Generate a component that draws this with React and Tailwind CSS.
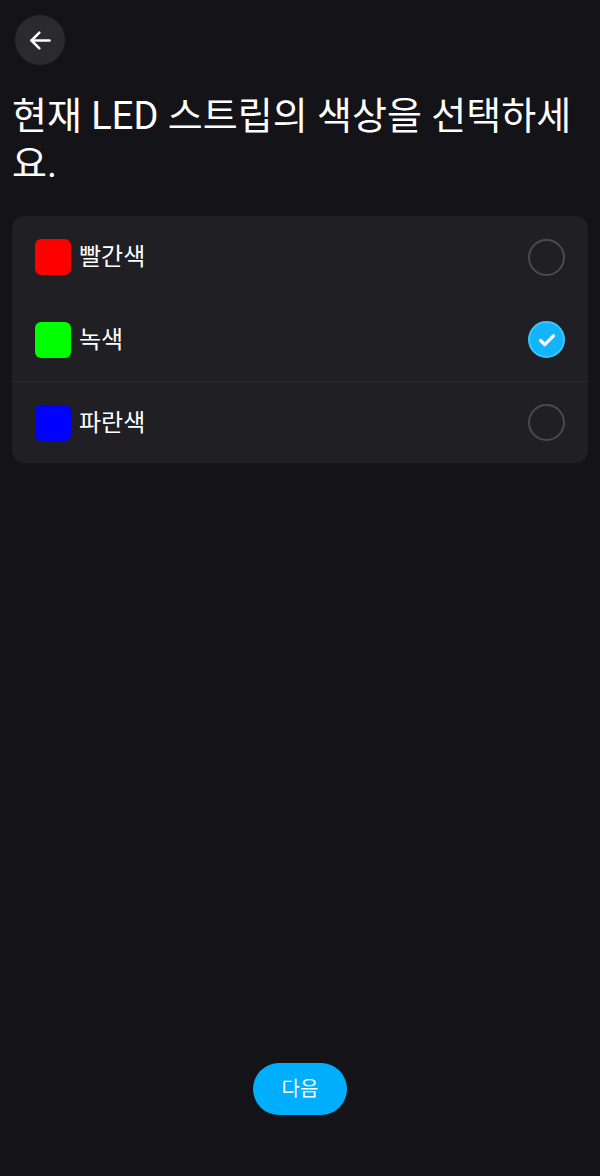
import React, { useState } from "react";

const options = [
  { id: "red", label: "빨간색", color: "bg-[#ff0000]", h: "h-[82px]" },
  { id: "green", label: "녹색", color: "bg-[#00ff00]", h: "h-[83px]" },
  { id: "blue", label: "파란색", color: "bg-[#0000ff]", h: "h-[82px] border-t border-[#2a2a2f]" },
];

export default function App() {
  const [selected, setSelected] = useState("green");
  return (
    <div
      className="w-[600px] h-[1176px] bg-[#131318] text-white flex flex-col"
      style={{ fontFamily: 'Roboto, "Noto Sans CJK KR", "Noto Sans", sans-serif' }}
    >
      <div className="px-[15px] pt-[15px]">
        <button className="w-[50px] h-[50px] rounded-full bg-[#2a2a2f] flex items-center justify-center">
          <svg width="27" height="27" viewBox="0 0 24 24" fill="none" stroke="white" strokeWidth="2.2" strokeLinecap="round" strokeLinejoin="round">
            <path d="M20 12H4" />
            <path d="M11 5l-7 7 7 7" />
          </svg>
        </button>
      </div>
      <h1 className="px-[12px] mt-[27px] text-[38px] leading-[48px] font-normal">
        현재 LED 스트립의 색상을 선택하세요.
      </h1>
      <div className="mx-[12px] mt-[28px] rounded-[12px] bg-[#1f1f24] overflow-hidden">
        {options.map((o) => (
          <div
            key={o.id}
            onClick={() => setSelected(o.id)}
            className={`flex items-center pl-[23px] pr-[23px] ${o.h}`}
          >
            <div className={`w-[36px] h-[36px] rounded-[6px] ${o.color}`} />
            <span className="ml-[8px] text-[24px] leading-none">{o.label}</span>
            <div className="ml-auto">
              {selected === o.id ? (
                <div className="w-[37px] h-[37px] rounded-full bg-[#12b5fb] border-2 border-[#3ec3fc] flex items-center justify-center">
                  <svg width="22" height="22" viewBox="0 0 24 24" fill="none" stroke="white" strokeWidth="3.6" strokeLinecap="round" strokeLinejoin="round">
                    <path d="M5 12.5l4.5 4.5L19 7.5" />
                  </svg>
                </div>
              ) : (
                <div className="w-[37px] h-[37px] rounded-full border-2 border-[#4a4a4f]" />
              )}
            </div>
          </div>
        ))}
      </div>
      <div className="mt-auto mb-[61px] flex justify-center">
        <button className="w-[94px] h-[52px] rounded-full bg-[#00aefe] text-white text-[20px]">다음</button>
      </div>
    </div>
  );
}
